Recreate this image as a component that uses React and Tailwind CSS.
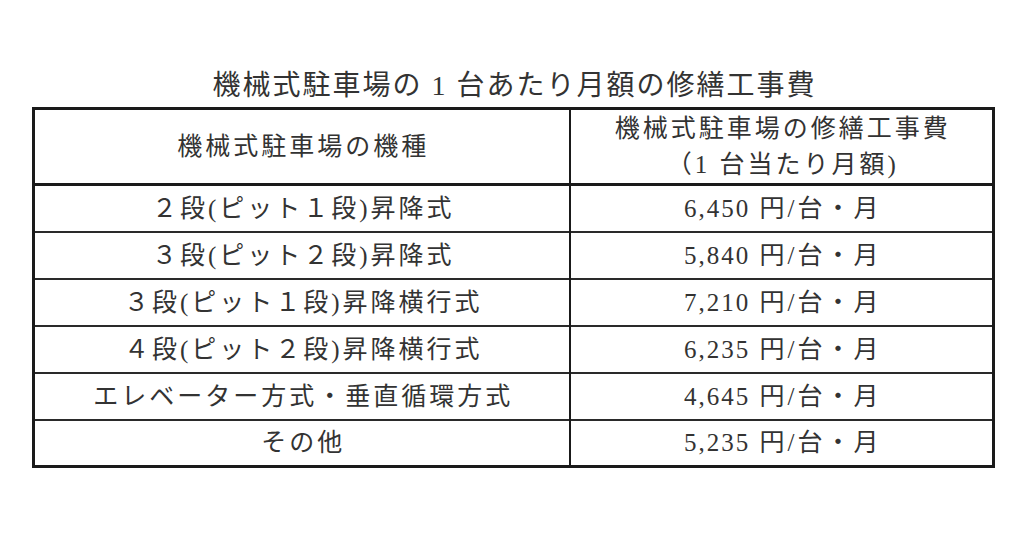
const rows = [
  ['２段(ピット１段)昇降式', '6,450'],
  ['３段(ピット２段)昇降式', '5,840'],
  ['３段(ピット１段)昇降横行式', '7,210'],
  ['４段(ピット２段)昇降横行式', '6,235'],
  ['エレベーター方式・垂直循環方式', '4,645'],
  ['その他', '5,235'],
];

export default function App() {
  return (
    <div
      className="w-[1024px] h-[538px] bg-white text-[#333333] flex flex-col items-start pl-[32px] pt-[70px]"
      style={{ fontFamily: '"Liberation Serif", "Noto Sans CJK JP", serif' }}
    >
      <h1 className="w-[963px] text-center text-[28px] leading-[31px] font-normal tracking-[2px] pl-[2px]">
        機械式駐車場の 1 台あたり月額の修繕工事費
      </h1>
      <table className="mt-[6px] w-[963px] border-collapse border-[3px] border-[#1a1a1a] text-[25px] tracking-[3px]">
        <thead>
          <tr className="h-[76px] border-b-[3px] border-[#1a1a1a]">
            <th className="w-[536px] font-normal border-r-[2px] border-[#1a1a1a] text-center leading-[36px] pl-[3px]">
              機械式駐車場の機種
            </th>
            <th className="font-normal text-center leading-[36px] pl-[3px]">
              <div>機械式駐車場の修繕工事費</div>
              <div>（1 台当たり月額)</div>
            </th>
          </tr>
        </thead>
        <tbody>
          {rows.map(([name, price], i) => (
            <tr key={i} className="h-[47px] border-b-[2px] border-[#2a2a2a]">
              <td className="border-r-[2px] border-[#1a1a1a] text-center leading-none pl-[3px]">{name}</td>
              <td className="text-center leading-none pl-[3px]">
                <span className="tracking-[2px]">{price}</span> 円/台・月
              </td>
            </tr>
          ))}
        </tbody>
      </table>
    </div>
  );
}
